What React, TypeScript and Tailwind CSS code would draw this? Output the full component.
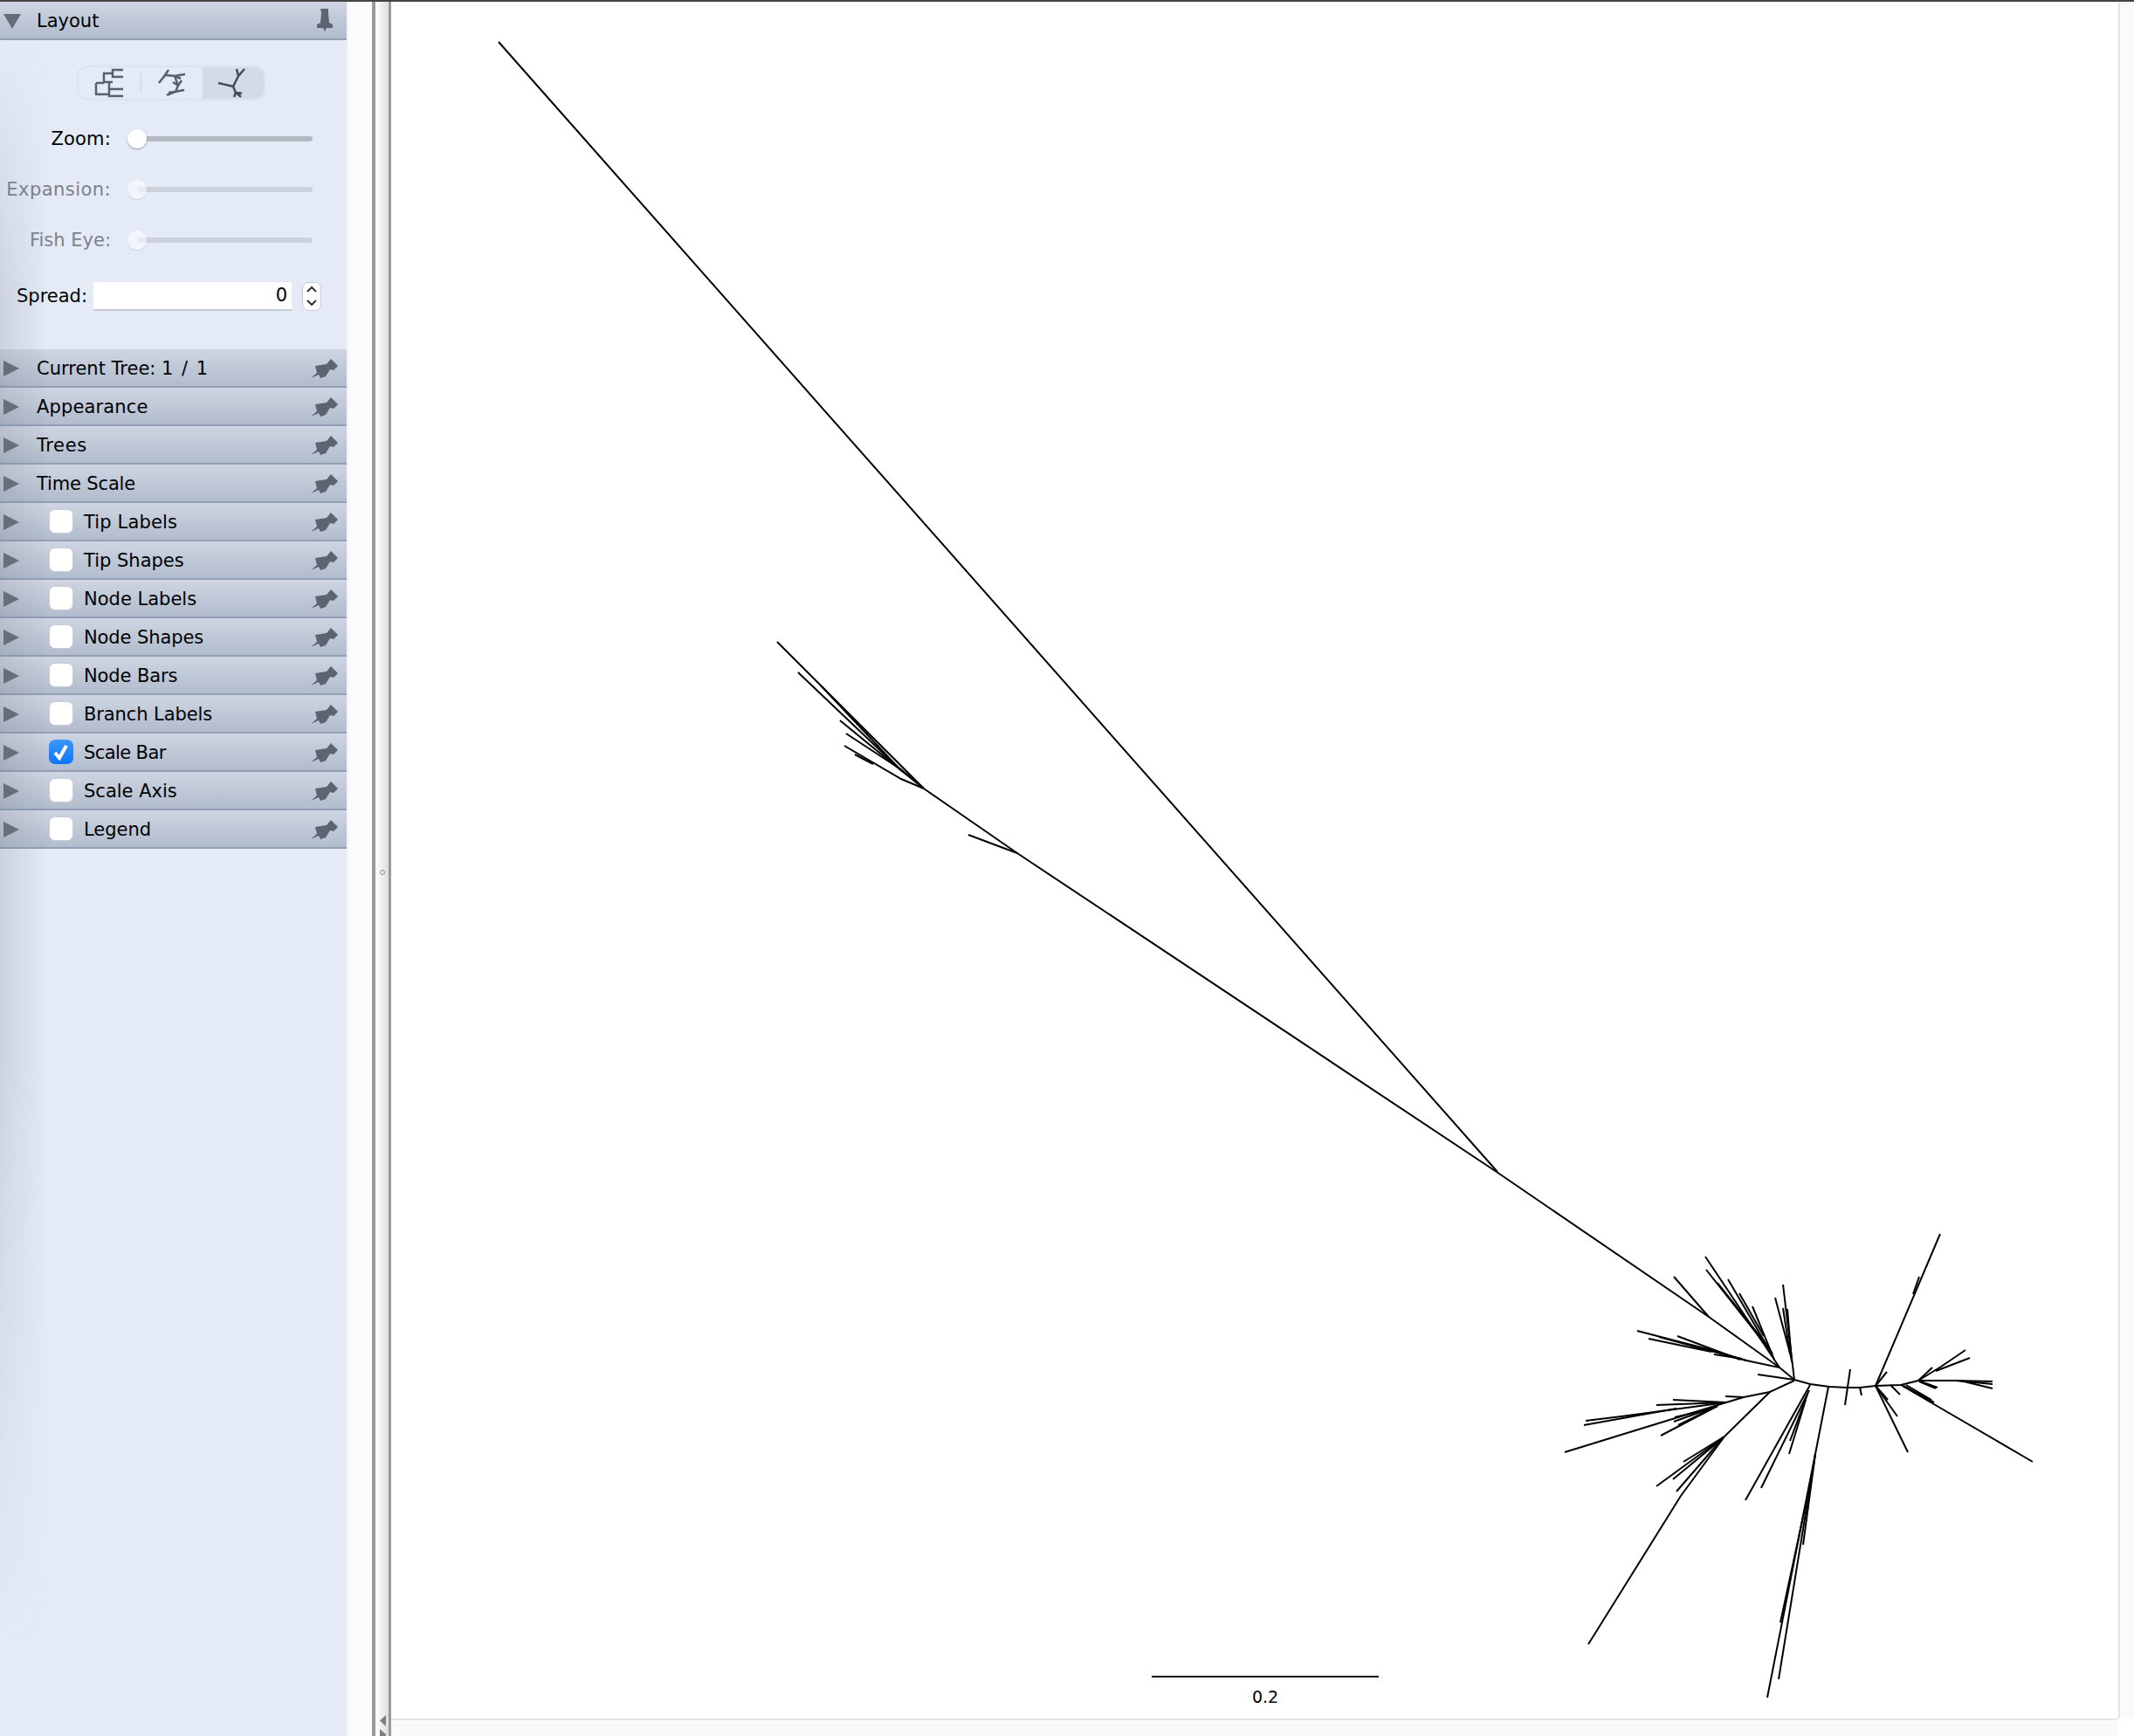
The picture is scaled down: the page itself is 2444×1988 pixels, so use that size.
import React from "react";

const font = { fontFamily: '"DejaVu Sans", "Liberation Sans", sans-serif' };

// Every branch of the unrooted tree, in page coordinates.
const branches: string[] = [
  // long stems
  "571,48 1715,1342",
  "890,735 1058,903 1165,977 1714,1342 1957,1508 2038,1566 2055,1580",
  // upper-left cluster
  "914,770 1033,883",
  "940,785 1027,877 1058,903",
  "962,825 1023,875 1058,903",
  "969,840 1027,878",
  "967,854 1032,892 1058,903",
  "979,864 1000,875",
  "1109,956 1165,977",
  // upper cluster
  "1917,1462 1957,1508",
  "1953,1439 2038,1566",
  "1954,1454 2030,1550",
  "1967,1469 2025,1542",
  "1979,1465 2023,1540",
  "1992,1481 2020,1530",
  "2007,1496 2032,1557",
  "1900,1531 2000,1558 2038,1566",
  "1875,1524 1960,1546 2000,1558",
  "1888,1533 1960,1548",
  "1921,1530 1993,1557",
  "1963,1551 1995,1556",
  "2013,1574 2055,1580",
  "2042,1471 2055,1580",
  "2033,1486 2052,1557",
  "2042,1498 2050,1550",
  "2047,1499 2052,1560",
  // backbone
  "2055,1580 2073,1585 2095,1588 2115,1589 2130,1589 2148,1587 2177,1586 2197,1581",
  "2119,1568 2113,1609",
  "2130,1589 2132,1598",
  "2148,1587 2161,1571",
  "2148,1587 2222,1413",
  "2198,1462 2191,1482",
  "2148,1587 2173,1622",
  "2148,1587 2162,1603",
  "2148,1587 2185,1663",
  "2165,1586 2176,1597",
  "2177,1586 2328,1674",
  "2180,1587 2215,1606",
  "2183,1586 2212,1603",
  // right cluster
  "2197,1581 2213,1566",
  "2197,1581 2219,1589",
  "2198,1582 2217,1590",
  "2197,1581 2223,1565 2251,1546",
  "2217,1570 2256,1555",
  "2197,1581 2240,1581 2282,1582",
  "2240,1581 2282,1585",
  "2245,1581 2282,1590",
  // lower-left clusters
  "2055,1581 2027,1594 1997,1600 1977,1606",
  "1997,1600 1976,1599",
  "1977,1606 1916,1603",
  "1977,1606 1897,1609",
  "1977,1606 1857,1622 1816,1627",
  "1920,1613 1814,1632",
  "1977,1606 1792,1663",
  "1967,1610 1917,1628",
  "1967,1610 1922,1632",
  "1967,1610 1902,1644",
  "1960,1613 1918,1623",
  "2027,1594 1975,1645",
  "1975,1645 1928,1674",
  "1975,1645 1897,1702",
  "1967,1652 1916,1694",
  "1972,1648 1920,1708",
  "1975,1645 1925,1713 1819,1883",
  // lower fans
  "2073,1586 1999,1718",
  "2072,1592 2017,1704",
  "2070,1597 2050,1650",
  "2068,1603 2049,1665",
  "2094,1588 2079,1665",
  "2079,1665 2024,1944",
  "2079,1665 2037,1923",
  "2079,1665 2065,1769",
  "2068,1723 2039,1858",
];

function PinFlat() {
  return (
    <svg width="33" height="24" viewBox="0 0 33 24" className="mt-[2px] shrink-0">
      <path
        d="M1 23 L8 17 L6 9 L19 7 L24 1 L32 9 L27 14 L23 13 L18 21 L12 23 L10 19 Z"
        fill="#5c6371"
      />
    </svg>
  );
}

function PinUp() {
  return (
    <svg width="20" height="28" viewBox="0 0 20 28" className="shrink-0">
      <path d="M5 1 H14 L14 6 L15 17 L19 19 V23 H12 L10 27 L8 23 H1 V19 L5 17 L6 6 Z" fill="#5c6371" />
    </svg>
  );
}

function Arrow({ open }: { open?: boolean }) {
  return (
    <svg width="22" height="20" viewBox="0 0 22 20" className="mt-[2px] shrink-0">
      {open ? <path d="M1 2 H21 L11 19 Z" fill="#666c78" /> : <path d="M1 1 L19 10 L1 19 Z" fill="#666c78" />}
    </svg>
  );
}

function Box({ checked }: { checked?: boolean }) {
  if (checked) {
    return (
      <span className="flex h-[28px] w-[28px] shrink-0 items-center justify-center rounded-[7px] bg-gradient-to-b from-[#3a97ff] to-[#0a76fb]">
        <svg width="22" height="22" viewBox="0 0 22 22">
          <path d="M4 12 L9 18 L17 4" fill="none" stroke="#fff" strokeWidth="3.9" />
        </svg>
      </span>
    );
  }
  return <span className="block h-[28px] w-[28px] shrink-0 rounded-[7px] border border-[#c9ced6] bg-white" />;
}

function Row({
  label,
  box,
  checked,
  cls = "",
  children,
}: {
  label?: string;
  box?: boolean;
  checked?: boolean;
  cls?: string;
  children?: React.ReactNode;
}) {
  return (
    <div className="flex h-[44px] items-center border-b-2 border-[#929fb5] bg-gradient-to-b from-[#cfd5e2] to-[#b1bccd] pl-[3px] pr-[9px]">
      <Arrow />
      {box ? (
        <div className="ml-[31px] flex items-center gap-[12px]">
          <Box checked={checked} />
          <span className={`pt-[2px] ${cls}`}>{label}</span>
        </div>
      ) : (
        <span className={`ml-[17px] pt-[2px] ${cls}`}>{children ?? label}</span>
      )}
      <span className="ml-auto flex">
        <PinFlat />
      </span>
    </div>
  );
}

function SliderRow({ label, disabled, cls = "" }: { label: string; disabled?: boolean; cls?: string }) {
  return (
    <div className={`flex h-[58px] items-center ${disabled ? "text-[#7c828b]" : "text-black"}`}>
      <span className={`w-[127px] text-right ${cls}`}>{label}</span>
      <div className="relative ml-[30px] h-[6px] w-[201px] rounded-full">
        <div className={`h-full rounded-full ${disabled ? "bg-[#ccd2dc]" : "bg-[#b4bac3]"}`} />
        <span
          className={`absolute left-[-11px] top-[-8px] h-[22px] w-[22px] rounded-full ${
            disabled ? "bg-white/50 shadow-[0_1px_1px_rgba(0,0,0,0.12)]" : "bg-white shadow-[0_1px_2px_rgba(0,0,0,0.35)]"
          }`}
        />
      </div>
    </div>
  );
}

function TreeStyles() {
  return (
    <div className="ml-[88px] flex h-[40px] w-[216px] overflow-hidden rounded-[12px] border-2 border-[#dce3ee]">
      <div className="flex w-[70px] items-center justify-center">
        <svg width="34" height="34" viewBox="0 0 34 34" fill="none" stroke="#5a606b" strokeWidth="2.5">
          <path d="M33 2 H21 V10 H33 M21 6 H11 V16 H21 M2 17 V30 H17 M2 17 H11 M17 30 V24 H33 M17 30 V32 H33 M17 24 V17" />
        </svg>
      </div>
      <div className="my-[7px] w-[2px] bg-[#d8dee9]" />
      <div className="flex w-[70px] items-center justify-center">
        <svg width="34" height="34" viewBox="0 0 34 34" fill="none" stroke="#5a606b" strokeWidth="2.5">
          <path d="M2 17 L9 8 L20 9 L24 20 L21 27 L11 31 M13 2 L9 8 M9 8 L7 11 M20 9 L32 7 M20 9 L27 12 M24 20 L28 14 M21 27 L31 25 M21 27 L13 28 M24 20 L18 16" />
        </svg>
      </div>
      <div className="flex flex-1 items-center justify-center bg-[#d4dbe7]">
        <svg width="36" height="34" viewBox="0 0 36 34" fill="none" stroke="#454b55" strokeWidth="2.5">
          <path d="M1 17 L18 21 L24 9 L31 1 M24 9 L22 1 M18 21 L21 28 L19 33 M21 28 L28 29 M21 28 L27 33" />
        </svg>
      </div>
    </div>
  );
}

function Sidebar() {
  return (
    <aside className="relative h-full w-[397px] shrink-0 bg-[#e4ebf6] text-[21px] leading-none text-black">
      <div className="flex h-[44px] items-center border-b-2 border-[#929fb5] bg-gradient-to-b from-[#cfd5e2] to-[#b1bccd] pl-[3px] pr-[15px]">
        <Arrow open />
        <span className="ml-[17px] pt-[2px]">Layout</span>
        <span className="ml-auto flex">
          <PinUp />
        </span>
      </div>
      <div className="h-[354px] pt-[29px]">
        <TreeStyles />
        <div className="mt-[15px]">
          <SliderRow label="Zoom:" cls="tracking-[0.2px]" />
          <SliderRow label="Expansion:" disabled cls="tracking-[0.45px]" />
          <SliderRow label="Fish Eye:" disabled />
        </div>
        <div className="mt-[18px] flex h-[34px] items-center">
          <span className="w-[100px] text-right">Spread:</span>
          <div className="ml-[7px] flex h-[33px] w-[227px] items-center justify-end border-b-2 border-[#c5cad3] bg-white pr-[5px]">
            0
          </div>
          <div className="ml-[12px] flex h-[33px] w-[22px] flex-col items-center justify-around rounded-[7px] border border-[#c5cad3] bg-white">
            <svg width="14" height="10" viewBox="0 0 14 10" fill="none" stroke="#333" strokeWidth="2">
              <path d="M2 8 L7 3 L12 8" />
            </svg>
            <svg width="14" height="10" viewBox="0 0 14 10" fill="none" stroke="#333" strokeWidth="2">
              <path d="M2 2 L7 7 L12 2" />
            </svg>
          </div>
        </div>
      </div>
      <Row>
        Current Tree: <span className="[word-spacing:3px]">1 / 1</span>
      </Row>
      <Row label="Appearance" cls="tracking-[0.15px]" />
      <Row label="Trees" cls="tracking-[0.6px]" />
      <Row label="Time Scale" cls="tracking-[-0.15px]" />
      <Row label="Tip Labels" box cls="tracking-[0.15px]" />
      <Row label="Tip Shapes" box />
      <Row label="Node Labels" box />
      <Row label="Node Shapes" box cls="tracking-[-0.1px]" />
      <Row label="Node Bars" box cls="tracking-[-0.1px]" />
      <Row label="Branch Labels" box cls="tracking-[-0.1px]" />
      <Row label="Scale Bar" box checked cls="tracking-[-0.6px]" />
      <Row label="Scale Axis" box />
      <Row label="Legend" box />
      <div className="pointer-events-none absolute bottom-0 left-0 top-[46px] w-[56px] bg-gradient-to-r from-[#6f768233] to-transparent [mask-image:linear-gradient(to_bottom,transparent,black_15%,black_60%,transparent_95%)]" />
    </aside>
  );
}

function Divider() {
  return (
    <div className="flex h-full w-[51px] shrink-0">
      <div className="h-full w-[29px] border-l-2 border-[#f2f4f7] bg-[#fbfbfb]" />
      <div className="relative h-full w-[22px] border-x-[3px] border-l-[4px] border-[#9a9a9a] bg-gradient-to-r from-white to-[#dedede]">
        <span className="absolute left-[5px] top-[994px] h-[6px] w-[6px] rounded-full border border-[#888]" />
        <svg width="12" height="26" viewBox="0 0 12 26" className="absolute bottom-[-2px] left-[3px]">
          <path d="M9 0 V13 L2 6.5 Z M2 16 L9 22 V26 H2 Z" fill="#808080" />
        </svg>
      </div>
    </div>
  );
}

function TreeCanvas() {
  return (
    <svg viewBox="448 2 1978 1966" className="block h-[1966px] w-[1978px] shrink-0 bg-white">
      <g fill="none" stroke="#000" strokeWidth="2">
        {branches.map((p, i) => (
          <polyline key={i} points={p} />
        ))}
        <line x1="1319" y1="1920" x2="1579" y2="1920" />
      </g>
      <text x="1449" y="1950" textAnchor="middle" fontSize="19" fill="#000" style={font}>
        0.2
      </text>
    </svg>
  );
}

export default function App() {
  return (
    <div className="flex h-[1988px] w-[2444px] flex-col overflow-hidden bg-white" style={font}>
      <div className="h-[2px] shrink-0 bg-[#444]" />
      <div className="flex min-h-0 flex-1">
        <Sidebar />
        <Divider />
        <div className="flex flex-1 flex-col">
          <div className="flex h-[1966px] shrink-0">
            <TreeCanvas />
            <div className="flex-1 border-l-2 border-[#e5e5e5] bg-[#fafafa]" />
          </div>
          <div className="flex flex-1">
            <div className="w-[1978px] border-t-2 border-[#e5e5e5] bg-[#fafafa]" />
            <div className="flex-1 bg-white" />
          </div>
        </div>
      </div>
    </div>
  );
}
